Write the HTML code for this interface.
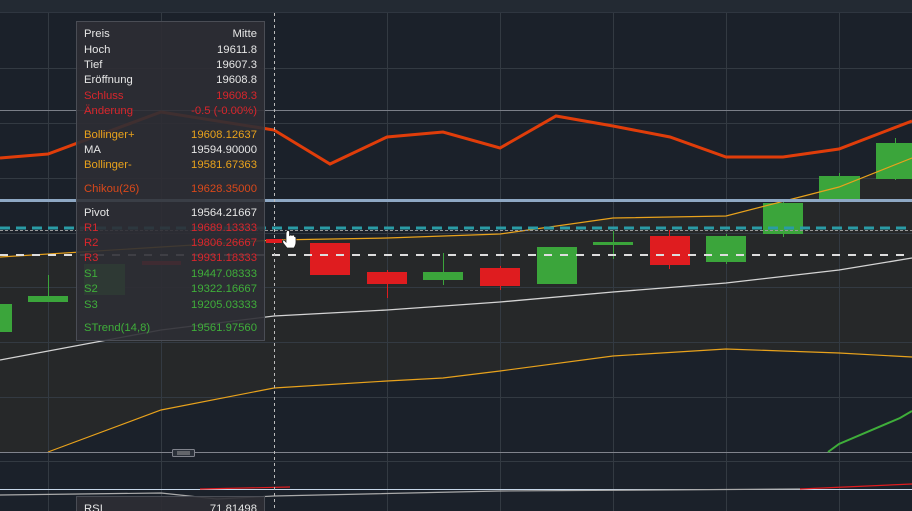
<!DOCTYPE html>
<html style="overflow:hidden;width:912px;height:511px"><head><meta charset="utf-8"><style>
body{margin:0;width:912px;height:511px;overflow:hidden;background:#1b212a;font-family:"Liberation Sans",sans-serif;position:relative}
.tt{position:absolute;left:76px;width:189px;background:rgba(46,46,52,0.9);border:1px solid #4a4d55;box-sizing:border-box;font-size:11.3px;color:#e6e6e6}
.r{position:absolute;left:7px;right:7px;height:14px;line-height:14px}
.r span{float:right}
.red{color:#d8262c}.or{color:#e8a21c}.ch{color:#d9481a}.gr{color:#3fae3a}
</style></head><body>
<svg width="912" height="511" style="position:absolute;left:0;top:0">
<rect x="0" y="0" width="912" height="12" fill="#232a33"/>
<line x1="0" y1="12.5" x2="912" y2="12.5" stroke="#2f3640"/>
<polygon fill="#262829" points="0,257 161,247 274,240 387,238 500,234 613,218 726,216 839,187 912,158 912,357 839,353 726,349 613,356 500,371 443,378 387,381 274,388 161,410 48,452 0,452"/>
<g stroke="#333a42" stroke-width="1">
<line x1="48.5" y1="13" x2="48.5" y2="511"/><line x1="161.5" y1="13" x2="161.5" y2="511"/><line x1="387.5" y1="13" x2="387.5" y2="511"/><line x1="500.5" y1="13" x2="500.5" y2="511"/><line x1="613.5" y1="13" x2="613.5" y2="511"/><line x1="726.5" y1="13" x2="726.5" y2="511"/><line x1="839.5" y1="13" x2="839.5" y2="511"/>
<line x1="0" y1="68.5" x2="912" y2="68.5"/><line x1="0" y1="123.5" x2="912" y2="123.5"/><line x1="0" y1="178.5" x2="912" y2="178.5"/><line x1="0" y1="233.5" x2="912" y2="233.5"/><line x1="0" y1="287.5" x2="912" y2="287.5"/><line x1="0" y1="342.5" x2="912" y2="342.5"/><line x1="0" y1="397.5" x2="912" y2="397.5"/><line x1="0" y1="461.5" x2="912" y2="461.5"/>
</g>
<line x1="0" y1="110.5" x2="912" y2="110.5" stroke="#7b7f88"/>
<g>
<rect x="0" y="304" width="12" height="28" fill="#3ba53b"/>
<line x1="48.5" y1="275" x2="48.5" y2="300" stroke="#3ba53b"/><rect x="28" y="296" width="40" height="6" fill="#3ba53b"/>
<rect x="84" y="264" width="41" height="31" fill="#3ba53b"/>
<rect x="142" y="261" width="39" height="4" fill="#df1c1f"/>
<rect x="310" y="243" width="40" height="32" fill="#df1c1f"/>
<line x1="387.5" y1="270" x2="387.5" y2="298" stroke="#df1c1f"/><rect x="367" y="272" width="40" height="12" fill="#df1c1f"/>
<line x1="443.5" y1="253" x2="443.5" y2="285" stroke="#3ba53b"/><rect x="423" y="272" width="40" height="8" fill="#3ba53b"/>
<line x1="500.5" y1="266" x2="500.5" y2="290" stroke="#df1c1f"/><rect x="480" y="268" width="40" height="18" fill="#df1c1f"/>
<rect x="537" y="247" width="40" height="37" fill="#3ba53b"/>
<line x1="613.5" y1="231" x2="613.5" y2="259" stroke="#3ba53b"/><rect x="593" y="242" width="40" height="3" fill="#3ba53b"/>
<line x1="669.5" y1="230" x2="669.5" y2="269" stroke="#df1c1f"/><rect x="650" y="236" width="40" height="29" fill="#df1c1f"/>
<line x1="726.5" y1="234" x2="726.5" y2="264" stroke="#3ba53b"/><rect x="706" y="236" width="40" height="26" fill="#3ba53b"/>
<line x1="783.5" y1="200" x2="783.5" y2="237" stroke="#3ba53b"/><rect x="763" y="203" width="40" height="31" fill="#3ba53b"/>
<line x1="839.5" y1="173" x2="839.5" y2="200" stroke="#3ba53b"/><rect x="819" y="176" width="41" height="24" fill="#3ba53b"/>
<line x1="895.5" y1="138" x2="895.5" y2="180" stroke="#3ba53b"/><rect x="876" y="143" width="36" height="36" fill="#3ba53b"/>
</g>
<polyline fill="none" stroke="#e8a21c" stroke-width="1.2" points="0,257 161,247 274,240 387,238 500,234 613,218 726,216 839,187 912,158"/>
<polyline fill="none" stroke="#e8a21c" stroke-width="1.2" points="48,452 161,410 274,388 387,381 443,378 500,371 613,356 726,349 839,353 912,357"/>
<polyline fill="none" stroke="#d4d4d4" stroke-width="1.3" points="0,360 161,330 274,316 387,310 500,302 613,292 726,283 839,270 912,258"/>
<polyline fill="none" stroke="#e03d0a" stroke-width="3" points="0,158 48,154 161,112 274,130 330,164 387,137 443,132 500,148 556,116 613,126 670,137 726,157 783,157 839,149 912,121"/>
<line x1="0" y1="200.5" x2="912" y2="200.5" stroke="#8ea8c4" stroke-width="3"/>
<line x1="0" y1="228" x2="912" y2="228" stroke="#2a9ca6" stroke-width="3" stroke-dasharray="10,6"/>
<line x1="0" y1="230.5" x2="912" y2="230.5" stroke="#999" stroke-width="1" stroke-dasharray="3,2"/>
<line x1="0" y1="255" x2="912" y2="255" stroke="#dddddd" stroke-width="2" stroke-dasharray="8,8"/>
<line x1="0" y1="452.5" x2="912" y2="452.5" stroke="#80838c"/>
<rect x="172.5" y="449.5" width="22" height="7" rx="1" fill="#2b313a" stroke="#80838c"/>
<line x1="177" y1="452" x2="190" y2="452" stroke="#999"/><line x1="177" y1="454" x2="190" y2="454" stroke="#999"/>
<polyline fill="none" stroke="#3fae3a" stroke-width="2" points="828,452 839,444 900,418 912,411"/>
<line x1="0" y1="489.5" x2="912" y2="489.5" stroke="#c8d8ea"/>
<polyline fill="none" stroke="#aaa" stroke-width="1.2" points="0,495 161,493 217,499 274,496 500,491 800,489"/>
<polyline fill="none" stroke="#df1c1f" stroke-width="1.2" points="800,489 912,484"/>
<polyline fill="none" stroke="#df1c1f" stroke-width="1.2" points="200,489 290,487"/>
<line x1="274.5" y1="13" x2="274.5" y2="511" stroke="#bbb" stroke-dasharray="3,3"/>
<rect x="266" y="239" width="16" height="4" fill="#df1c1f"/>
<path d="M286 232 v10 l-2 -2 q-2 0 -1 3 l4 5 h7 q2 -3 2 -6 v-4 q0 -1.5 -1.5 -1.5 v-1 q-1.5 -1 -2.5 0 q-1 -1 -2.5 0 v-3.5 q0 -1.5 -1.5 -1.5 q-1.5 0 -1.5 1.5z" fill="#fff" stroke="#222" stroke-width="0.8"/>
</svg>
<div class="tt" style="top:21px;height:320px">
<div class="r" style="top:5px">Preis<span>Mitte</span></div>
<div class="r" style="top:21px">Hoch<span>19611.8</span></div>
<div class="r" style="top:36px">Tief<span>19607.3</span></div>
<div class="r" style="top:51px">Eröffnung<span>19608.8</span></div>
<div class="r red" style="top:67px">Schluss<span>19608.3</span></div>
<div class="r red" style="top:82px">Änderung<span>-0.5 (-0.00%)</span></div>
<div class="r or" style="top:106px">Bollinger+<span>19608.12637</span></div>
<div class="r" style="top:121px">MA<span>19594.90000</span></div>
<div class="r or" style="top:136px">Bollinger-<span>19581.67363</span></div>
<div class="r ch" style="top:160px">Chikou(26)<span>19628.35000</span></div>
<div style="position:absolute;left:0;right:0;top:177px;height:3px;background:#3a3e46"></div>
<div class="r" style="top:184px">Pivot<span>19564.21667</span></div>
<div class="r red" style="top:199px">R1<span>19689.13333</span></div>
<div class="r red" style="top:214px">R2<span>19806.26667</span></div>
<div class="r red" style="top:229px">R3<span>19931.18333</span></div>
<div class="r gr" style="top:245px">S1<span>19447.08333</span></div>
<div class="r gr" style="top:260px">S2<span>19322.16667</span></div>
<div class="r gr" style="top:276px">S3<span>19205.03333</span></div>
<div class="r gr" style="top:299px">STrend(14,8)<span>19561.97560</span></div>
</div>
<div class="tt" style="top:496px;height:15px;border-bottom:none">
<div class="r" style="top:5px">RSI<span>71.81498</span></div>
</div>
</body></html>
